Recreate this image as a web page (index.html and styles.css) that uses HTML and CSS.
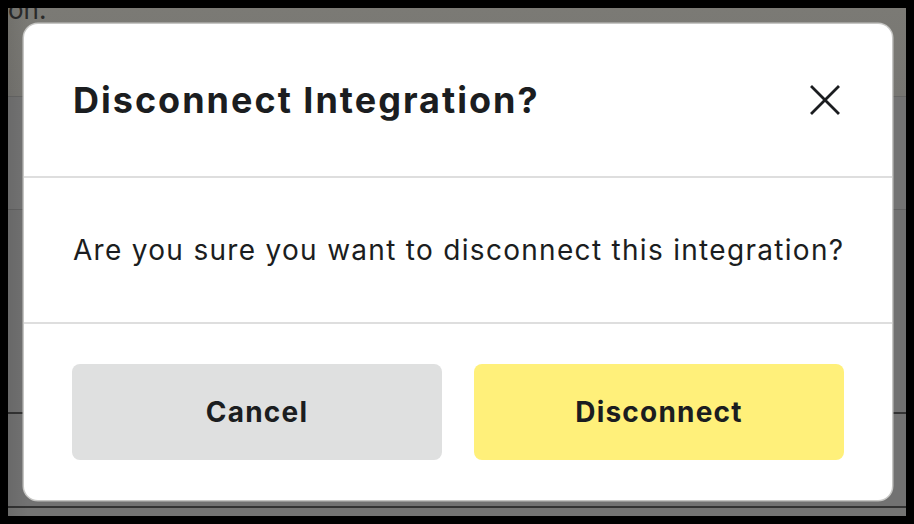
FILE: index.html
```html
<!DOCTYPE html>
<html lang="en">
<head>
<meta charset="utf-8">
<title>Disconnect Integration?</title>
<link rel="stylesheet" href="styles.css">
</head>
<body>
<div class="screen">
  <div class="page">
    <div class="row row-top"><p class="page-text">on.</p></div>
    <div class="row row-a"></div>
    <div class="row row-b"></div>
    <div class="row row-c"></div>
  </div>
  <div class="overlay"></div>
  <div class="modal" role="dialog" aria-labelledby="modal-title">
    <div class="modal-header">
      <h2 id="modal-title" class="modal-title">Disconnect Integration?</h2>
      <button class="close-btn" aria-label="Close">
        <svg width="30" height="30" viewBox="0 0 30 30" fill="none" stroke="#1b1d20" stroke-width="2.8" stroke-linecap="square">
          <path d="M2 2 L28 28 M28 2 L2 28"/>
        </svg>
      </button>
    </div>
    <div class="modal-body">
      <p class="modal-text">Are you sure you want to disconnect this integration?</p>
    </div>
    <div class="modal-footer">
      <button class="btn btn-cancel">Cancel</button>
      <button class="btn btn-primary">Disconnect</button>
    </div>
  </div>
</div>
</body>
</html>
```
FILE: styles.css
```css
html, body {
  margin: 0;
  padding: 0;
  background: #000;
}
body {
  width: 914px;
  height: 524px;
  overflow: hidden;
  font-family: "Inter", "Lato", sans-serif;
  color: #1b1d20;
}
.screen {
  margin: 8px;
  width: 898px;
  height: 508px;
  position: relative;
  overflow: hidden;
  background: #747473;
}
.page {
  display: flex;
  flex-direction: column;
  height: 100%;
}
.row {
  flex: none;
}
.row-top {
  height: 88px;
  border-bottom: 1px solid #666665;
  background: linear-gradient(#7b7a75, #777672);
  overflow: hidden;
}
.page-text {
  margin: -13px 0 0 0;
  font-size: 26px;
  line-height: 30px;
  color: #2a2a2a;
}
.row-a {
  height: 112px;
  border-bottom: 1px solid #626262;
  background: #737373;
}
.row-b {
  height: 202px;
  border-bottom: 2px solid #333;
  background: #717171;
}
.row-c {
  height: 92px;
  border-bottom: 2px solid #333;
  background: #727272;
}
.overlay {
  position: absolute;
  inset: 0;
  background: linear-gradient(90deg, rgba(0,0,0,0.08), rgba(0,0,0,0) 20px);
}
.modal {
  position: absolute;
  left: 16px;
  top: 16px;
  width: 868px;
  height: 476px;
  background: #fff;
  border-radius: 14px;
  box-shadow: 0 0 0 1.5px #c6c6c4, 0 1px 1px 1px rgba(0,0,0,0.1);
  display: flex;
  flex-direction: column;
}
.modal-header {
  box-sizing: border-box;
  border-bottom: 2px solid #dedede;
  display: flex;
  align-items: center;
  justify-content: space-between;
  padding: 0 52px 0 49px;
  height: 154px;
}
.modal-title {
  margin: 0;
  font-size: 36px;
  font-weight: 700;
  letter-spacing: 2px;
}
.close-btn {
  border: 0;
  background: none;
  padding: 0;
  width: 30px;
  height: 30px;
  display: flex;
}
.modal-body {
  height: 146px;
  box-sizing: border-box;
  border-bottom: 2px solid #dedede;
  display: flex;
  align-items: center;
  padding: 0 30px 0 49px;
}
.modal-text {
  margin: 0;
  font-size: 28px;
  letter-spacing: 1.3px;
  white-space: nowrap;
}
.modal-footer {
  flex: 1;
  display: grid;
  grid-template-columns: 1fr 1fr;
  gap: 32px;
  padding: 40px 48px;
}
.btn {
  border: 0;
  border-radius: 8px;
  font-family: "Inter", "Lato", sans-serif;
  font-size: 28px;
  font-weight: 700;
  letter-spacing: 1.2px;
  color: #1b1d20;
}
.btn-cancel {
  background: #dfe0e0;
}
.btn-primary {
  background: #fff07a;
}
```
